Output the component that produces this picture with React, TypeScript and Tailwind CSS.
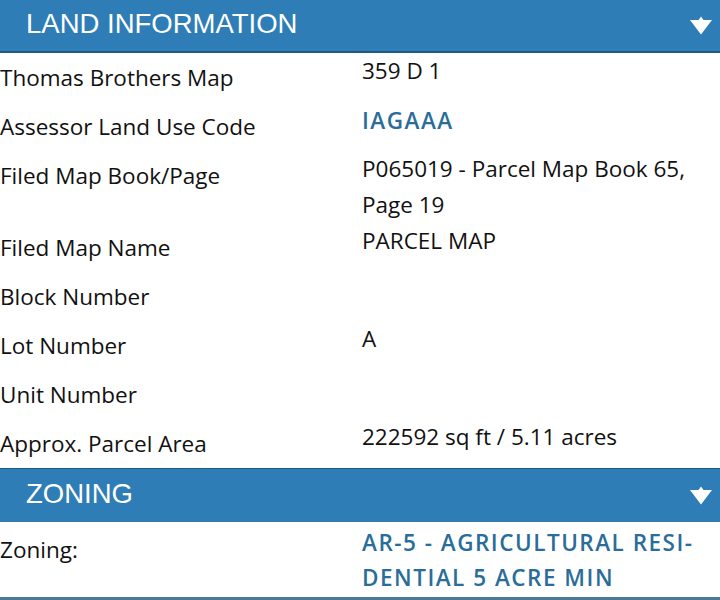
import React from "react";

const Arrow = () => (
  <svg width="24" height="20" viewBox="0 0 24 20" className="block">
    <path d="M1 4 L9.5 4 L12 0.5 L14.5 4 L23 4 L12 18.5 Z" fill="#ffffff" />
  </svg>
);

const Header = ({ title, cls }: { title: string; cls: string }) => (
  <div
    className={
      "flex items-center justify-between bg-[#2e7db6] pl-[26px] pr-[7px] " + cls
    }
  >
    <span
      className="text-white text-[27.5px] leading-none mb-[4px]"
      style={{ fontFamily: '"Liberation Sans", Arial, sans-serif' }}
    >
      {title}
    </span>
    <Arrow />
  </div>
);

type Row = { label: string; value?: React.ReactNode; blue?: boolean };

const rows: Row[] = [
  { label: "Thomas Brothers Map", value: "359 D 1" },
  { label: "Assessor Land Use Code", value: "IAGAAA", blue: true },
  {
    label: "Filed Map Book/Page",
    value: (
      <>
        P065019 - Parcel Map Book 65,
        <br />
        Page 19
      </>
    ),
  },
  { label: "Filed Map Name", value: "PARCEL MAP" },
  { label: "Block Number" },
  { label: "Lot Number", value: "A" },
  { label: "Unit Number" },
  { label: "Approx. Parcel Area", value: "222592 sq ft / 5.11 acres" },
];

export default function App() {
  return (
    <div
      className="w-[720px] h-[600px] bg-white overflow-hidden text-[#111111]"
      style={{ fontFamily: '"Open Sans", "Noto Sans", sans-serif' }}
    >
      <Header title="LAND INFORMATION" cls="h-[53px] border-b-2 border-[#1d5a86]" />
      <div className="flex flex-col">
        {rows.map((r) => (
          <div key={r.label} className="flex min-h-[49px]">
            <div className="w-[362px] shrink-0 text-[22.5px] leading-[49px]">
              {r.label}
            </div>
            <div
              className={
                "flex-1 text-[22.5px] leading-[36px] " +
                (r.blue
                  ? "font-semibold text-[#2a6d99] tracking-[1.5px] pt-[1px]"
                  : "")
              }
            >
              {r.value}
            </div>
          </div>
        ))}
      </div>
      <Header title="ZONING" cls="h-[54px] border-t border-[#1d5a86]" />
      <div className="flex h-[78px] border-b-[3px] border-[#4a7899]">
        <div className="w-[362px] shrink-0 text-[22.5px] leading-[56px]">
          Zoning:
        </div>
        <div className="flex-1 pt-[3px] text-[22.5px] leading-[35px] font-semibold text-[#2a6d99] tracking-[1.5px]">
          AR-5 - AGRICULTURAL RESI-
          <br />
          DENTIAL 5 ACRE MIN
        </div>
      </div>
    </div>
  );
}
